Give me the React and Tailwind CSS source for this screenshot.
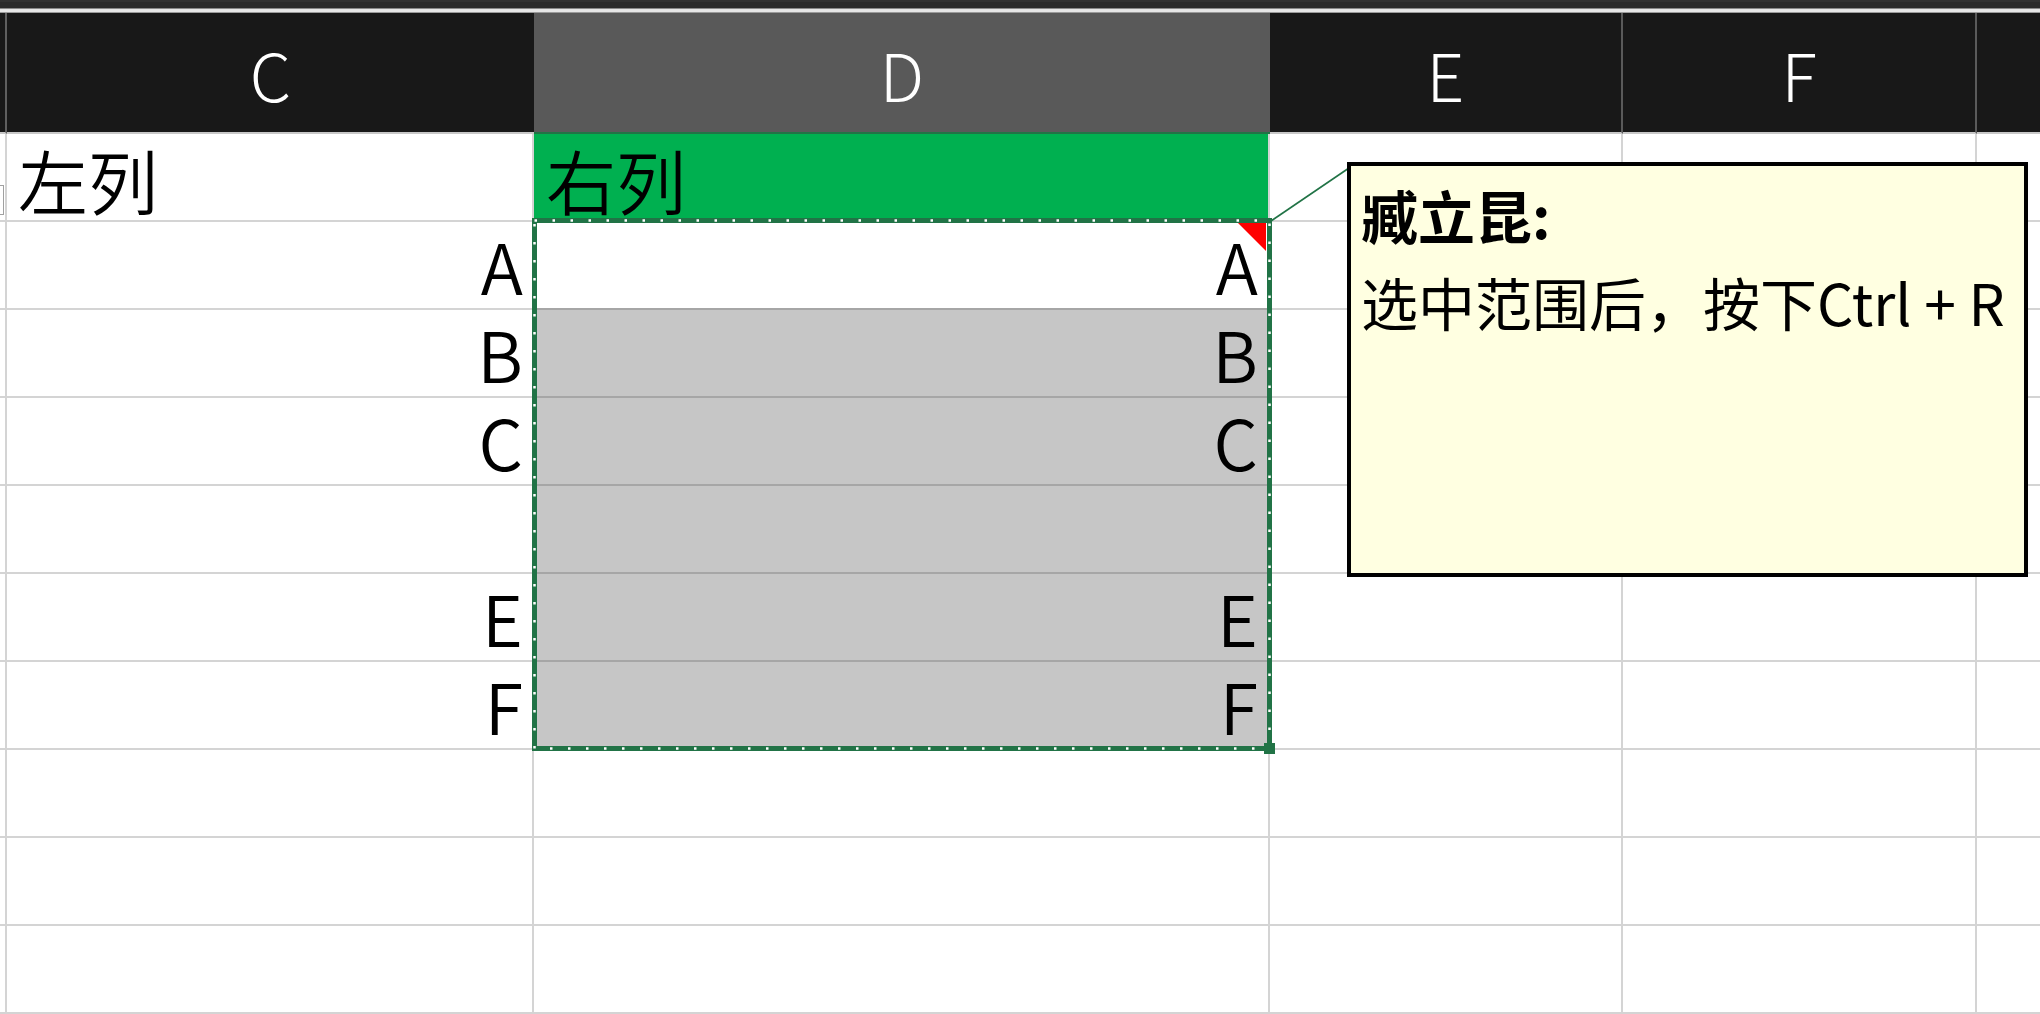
import React from "react";

const rows = [
  { c: "左列", d: "右列", cjk: true },
  { c: "A", d: "A" },
  { c: "B", d: "B" },
  { c: "C", d: "C" },
  { c: "", d: "" },
  { c: "E", d: "E" },
  { c: "F", d: "F" },
  { c: "", d: "", plain: true },
  { c: "", d: "", plain: true },
  { c: "", d: "", plain: true },
];

function HeaderRow() {
  return (
    <div className="flex h-[121px]">
      <div className="w-[7px] shrink-0 bg-[#181818] border-r-2 border-r-[#5f5f5f] border-b-2 border-b-[#c8c8c8]" />
      <div className="w-[527px] shrink-0 bg-[#181818] border-b-2 border-b-[#c8c8c8] flex items-center justify-center text-white text-[66px] leading-none font-light">
        C
      </div>
      <div className="w-[736px] shrink-0 bg-[#595959] border-b-2 border-b-[#217346] flex items-center justify-center text-white text-[66px] leading-none font-light">
        D
      </div>
      <div className="w-[353px] shrink-0 bg-[#181818] border-r-2 border-r-[#5a5a5a] border-b-2 border-b-[#c8c8c8] flex items-center justify-center text-white text-[66px] leading-none font-light">
        E
      </div>
      <div className="w-[354px] shrink-0 bg-[#181818] border-r-2 border-r-[#5a5a5a] border-b-2 border-b-[#c8c8c8] flex items-center justify-center text-white text-[66px] leading-none font-light">
        F
      </div>
      <div className="flex-1 bg-[#181818] border-b-2 border-b-[#c8c8c8]" />
    </div>
  );
}

function BodyRow({ row, index }) {
  const first = index === 0;
  const active = index === 1;
  const selected = index >= 2 && index <= 6;
  const pb = first ? "pb-[5px]" : "pb-[8px]";
  let dClass =
    "w-[736px] shrink-0 border-r-2 border-r-[#d4d4d4] border-b-2 flex text-[70px] leading-none font-[350] text-black relative ";
  if (first) dClass += "bg-[#00b050] border-b-[#d4d4d4] items-end justify-start pl-[12px] " + pb;
  else if (active) dClass += "bg-white border-b-[#a6a6a6] items-end justify-end pr-[10px] " + pb;
  else if (selected) dClass += "bg-[#c6c6c6] border-b-[#a6a6a6] items-end justify-end pr-[10px] " + pb;
  else dClass += "bg-white border-b-[#d4d4d4] items-end justify-end pr-[10px] " + pb;

  const cClass =
    "w-[527px] shrink-0 border-r-2 border-r-[#d4d4d4] border-b-2 border-b-[#d4d4d4] flex items-end text-[70px] leading-none font-[350] text-black " +
    (first ? "justify-start pl-[11px] " : "justify-end pr-[9px] ") +
    pb;

  return (
    <div className="flex h-[88px]">
      <div className="w-[7px] shrink-0 border-r-2 border-r-[#d4d4d4] border-b-2 border-b-[#d4d4d4]" />
      <div className={cClass}>{row.c}</div>
      <div className={dClass}>
        {row.d}
        {active && (
          <div className="absolute top-[1px] right-[2px] w-0 h-0 border-t-[28px] border-t-[#ff0000] border-l-[28px] border-l-transparent" />
        )}
      </div>
      <div className="w-[353px] shrink-0 border-r-2 border-r-[#d4d4d4] border-b-2 border-b-[#d4d4d4]" />
      <div className="w-[354px] shrink-0 border-r-2 border-r-[#d4d4d4] border-b-2 border-b-[#d4d4d4]" />
      <div className="flex-1 border-b-2 border-b-[#d4d4d4]" />
    </div>
  );
}

export default function App() {
  return (
    <div className="relative w-[2040px] h-[1014px] overflow-hidden bg-white font-['Noto_Sans_CJK_SC','Noto_Sans',sans-serif]">
      <div className="h-[8px] bg-[#2c2c2c] border-t-2 border-t-[#333333]" />
      <div className="h-[5px] bg-[#e6e6e6] border-t border-t-[#8a8a8a] border-b border-b-[#9a9a9a]" />
      <HeaderRow />
      {rows.map((r, i) => (
        <BodyRow key={i} row={r} index={i} />
      ))}

      {/* tiny partial control at left edge */}
      <div className="absolute left-[-6px] top-[185px] w-[10px] h-[30px] border border-[#a0a0a0] bg-white" />

      {/* copy marquee around D2:D7 */}
      <svg
        className="absolute left-[531px] top-[217px]"
        width="746"
        height="540"
        viewBox="0 0 746 540"
      >
        <rect x="3.5" y="3.5" width="735" height="528" fill="none" stroke="#217346" strokeWidth="5" />
        <rect
          x="3.5"
          y="3.5"
          width="735"
          height="528"
          fill="none"
          stroke="#ffffff"
          strokeWidth="2.5"
          strokeDasharray="2.5 15.5"
        />
        <rect x="733" y="526" width="11" height="11" fill="#217346" />
      </svg>

      {/* comment connector */}
      <svg className="absolute left-[1266px] top-[164px]" width="90" height="62" viewBox="0 0 90 62">
        <line x1="5" y1="57" x2="83" y2="4" stroke="#217346" strokeWidth="1.6" />
      </svg>

      {/* comment box */}
      <div className="absolute left-[1347px] top-[162px] w-[681px] h-[415px] border-[4px] border-black bg-[#ffffe1] pl-[10px] pt-[5px] text-[57px] leading-[87px] text-black">
        <div className="font-bold">臧立昆:</div>
        <div>选中范围后，按下Ctrl + R</div>
      </div>
    </div>
  );
}
